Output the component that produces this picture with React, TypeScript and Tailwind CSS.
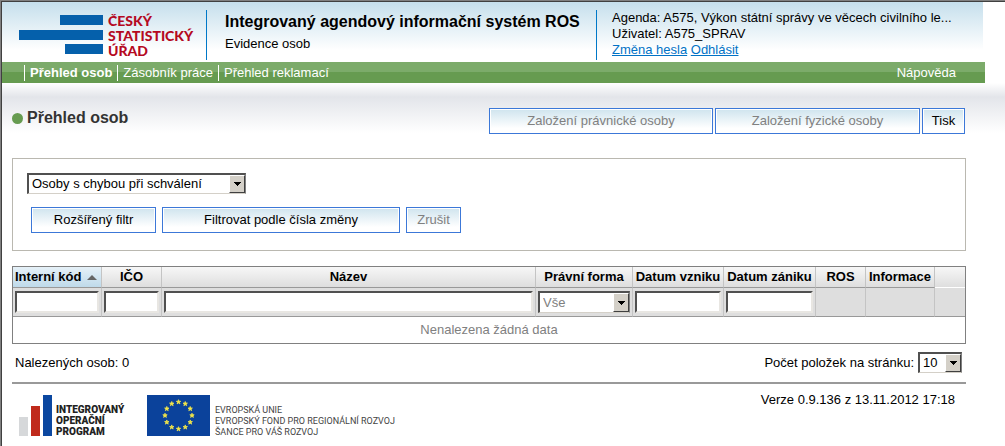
import * as React from "react"
import clsx from "clsx"

const NAV_ITEMS = [
  { label: "Přehled osob", active: true },
  { label: "Zásobník práce", active: false },
  { label: "Přehled reklamací", active: false },
]

type Column = {
  label: string
  width: string
  filter?: "text" | "select"
}

const COLUMNS: Column[] = [
  { label: "Interní kód", width: "w-[89px]", filter: "text" },
  { label: "IČO", width: "w-[60px]", filter: "text" },
  { label: "Název", width: "w-auto", filter: "text" },
  { label: "Právní forma", width: "w-[97px]", filter: "select" },
  { label: "Datum vzniku", width: "w-[91px]", filter: "text" },
  { label: "Datum zániku", width: "w-[92px]", filter: "text" },
  { label: "ROS", width: "w-[50px]" },
  { label: "Informace", width: "w-[69px]" },
  { label: "", width: "w-[30px]" },
]

// 12 stars on a circle, first one at the top
const STARS = Array.from({ length: 12 }, (_, i) => {
  const a = (i * Math.PI) / 6
  return { x: 31.5 + 13.5 * Math.sin(a), y: 20.5 - 13.5 * Math.cos(a) }
})

function Button({ className, ...props }: React.ComponentProps<"button">) {
  return (
    <button
      type="button"
      className={clsx(
        "h-[26px] whitespace-nowrap border border-[#3c78d8] bg-linear-to-b from-[#cfe4ee] to-white to-80% text-[13px] inset-ring inset-ring-white disabled:text-[#808080]",
        className
      )}
      {...props}
    />
  )
}

function Select({ className, options, ...props }: React.ComponentProps<"select"> & { options: string[] }) {
  return (
    <span className={clsx("relative inline-block align-top", className)}>
      <select
        className="block h-full w-full appearance-none border-t-2 border-l-2 border-r border-b border-t-[#505050] border-l-[#505050] border-r-[#808080] border-b-[#d4d0c8] bg-white pl-[3px] text-[13px] leading-4"
        {...props}
      >
        {options.map((o) => (
          <option key={o}>{o}</option>
        ))}
      </select>
      <span className="pointer-events-none absolute top-[2px] right-px bottom-px flex w-4 items-center justify-center border border-t-white border-l-white border-r-[#404040] border-b-[#404040] bg-[#d4d0c8]">
        <svg width="7" height="4" viewBox="0 0 7 4" shapeRendering="crispEdges">
          <path d="M0 0h7v1H6v1H5v1H4v1H3V3H2V2H1V1H0z" />
        </svg>
      </span>
    </span>
  )
}

function Header() {
  return (
    <header className="mr-[22px] flex h-[60px] bg-linear-to-b from-[#c5dfec] to-white to-80% pt-2">
      <div className="flex h-[50px] w-[205px] shrink-0 gap-[5px] border-r border-[#0078c8] pl-[17px]">
        <svg className="mt-[5px]" width="84" height="40" viewBox="0 0 84 40" fill="#0560ab">
          <rect x="41" width="43" height="10" />
          <rect y="15" width="84" height="10" />
          <rect x="46" y="29" width="38" height="10" />
        </svg>
        <div className="mt-[3px] font-['Lato'] text-[14px] leading-[15px] font-black text-[#b5091f]">
          <div>ČESKÝ</div>
          <div>STATISTICKÝ</div>
          <div>ÚŘAD</div>
        </div>
      </div>
      <div className="min-w-0 flex-1 pl-[18px]">
        <h1 className="text-[16px] leading-6 font-bold whitespace-nowrap">
          Integrovaný agendový informační systém ROS
        </h1>
        <p className="mt-[2px] leading-4">Evidence osob</p>
      </div>
      <div className="h-[50px] w-[387px] shrink-0 border-l border-[#0078c8] pl-[15px] leading-4">
        <p>Agenda: A575, Výkon státní správy ve věcech civilního le...</p>
        <p>Uživatel: A575_SPRAV</p>
        <p>
          <a href="#heslo" className="text-[#0072c6] underline">Změna hesla</a>{" "}
          <a href="#odhlasit" className="text-[#0072c6] underline">Odhlásit</a>
        </p>
      </div>
    </header>
  )
}

function Nav() {
  return (
    <nav className="mr-5 flex h-[21px] items-center bg-linear-to-b from-[#7cab6a] from-50% to-[#669b50] to-50% pr-[29px] pl-[22px] text-white">
      {NAV_ITEMS.map((item) => (
        <a
          key={item.label}
          href="#nav"
          className={clsx("mr-[5px] border-l border-white pl-[5px] leading-4", item.active && "font-bold")}
        >
          {item.label}
        </a>
      ))}
      <a href="#napoveda" className="ml-auto leading-4">Nápověda</a>
    </nav>
  )
}

function PersonsTable() {
  return (
    <table className="mt-[15px] w-full table-fixed border-separate border-spacing-0 border border-[#808080]">
      <colgroup>
        {COLUMNS.map((c, i) => (
          <col key={i} className={c.width} />
        ))}
      </colgroup>
      <thead>
        <tr className="h-[21px]">
          {COLUMNS.map((c, i) => (
            <th
              key={i}
              className={clsx(
                "border-b bg-linear-to-b p-0 leading-5 font-bold whitespace-nowrap",
                i === 0 ? "from-[#e6f1f8] to-[#bfdaea]" : "from-[#f7f7f7] to-[#dedede]",
                i < COLUMNS.length - 1 ? "border-r border-r-[#c4c4c4] border-b-[#999]" : "border-b-white"
              )}
            >
              {i === 0 ? (
                <span className="flex items-center gap-[6px] pl-[2px]">
                  {c.label}
                  <svg width="10" height="5" viewBox="0 0 10 5" fill="#666">
                    <path d="M5 0l5 5H0z" />
                  </svg>
                </span>
              ) : (
                c.label
              )}
            </th>
          ))}
        </tr>
        <tr className="h-[29px]">
          {COLUMNS.map((c, i) => (
            <td
              key={i}
              className={clsx(
                "border-b border-b-[#999] bg-[#dedede] px-[2px] py-0",
                i < COLUMNS.length - 1 && "border-r border-r-[#c4c4c4]"
              )}
            >
              {c.filter === "text" && (
                <input
                  type="text"
                  aria-label={c.label}
                  className="block h-[22px] w-full border-t-2 border-r-2 border-b-2 border-l-2 border-t-[#505050] border-r-[#e8e6e2] border-b-[#e8e6e2] border-l-[#505050] bg-white px-1"
                />
              )}
              {c.filter === "select" && (
                <Select aria-label={c.label} options={["Vše"]} className="h-[22px] w-full text-[#808080]" />
              )}
            </td>
          ))}
        </tr>
      </thead>
      <tbody>
        <tr className="h-[26px]">
          <td colSpan={COLUMNS.length} className="p-0 text-center text-[#808080]">
            Nenalezena žádná data
          </td>
        </tr>
      </tbody>
    </table>
  )
}

function Footer() {
  return (
    <footer className="mt-[9px] flex items-start border-t-2 border-[#999] pt-[11px] pl-[7px]">
      <svg width="33" height="41" viewBox="0 0 33 41">
        <rect y="22" width="9" height="19" fill="#d6d8da" />
        <rect x="12" y="11" width="9" height="30" fill="#c02a1c" />
        <rect x="24" width="9" height="41" fill="#0b47a0" />
      </svg>
      <div className="mt-[9px] ml-1 w-[91px] font-['Roboto'] text-[10px] leading-[11px] font-black text-[#222]">
        <div>INTEGROVANÝ</div>
        <div>OPERAČNÍ</div>
        <div>PROGRAM</div>
      </div>
      <svg width="63" height="41" viewBox="0 0 63 41">
        <rect width="63" height="41" fill="#0b429b" />
        {STARS.map((s, i) => (
          <path
            key={i}
            transform={`translate(${s.x} ${s.y})`}
            d="M0-2.3L.6-.7 2.2-.7.9.3 1.4 1.9 0 .9-1.4 1.9-.9.3-2.2-.7-.6-.7z"
            fill="#f3e64a"
            stroke="#f3e64a"
            strokeWidth=".8"
          />
        ))}
      </svg>
      <div className="mt-[10px] ml-[5px] font-['Roboto'] text-[9px] leading-[11px] whitespace-nowrap text-[#444]">
        <div>EVROPSKÁ UNIE</div>
        <div>EVROPSKÝ FOND PRO REGIONÁLNÍ ROZVOJ</div>
        <div>ŠANCE PRO VÁŠ ROZVOJ</div>
      </div>
      <p className="mr-[11px] ml-auto -mt-[3px] leading-4">Verze 0.9.136 z 13.11.2012 17:18</p>
    </footer>
  )
}

export default function App() {
  return (
    <div className="border-t border-l border-[#808080] bg-white font-['Liberation_Sans',Arial,sans-serif] text-[13px] text-black">
      <div className="min-h-[calc(100vh-1px)] border-t border-l border-[#404040]">
        <Header />
        <Nav />
        <main className="bg-linear-to-b from-white via-[#e3e5ea] via-[14px] to-white to-[50px] bg-no-repeat pt-[25px] pr-[39px] pl-[10px]">
          <div className="flex items-start gap-[2px] pr-px">
            <h2 className="mr-auto flex items-center gap-1 text-[16px] leading-5 font-bold text-[#333]">
              <span className="size-[11px] rounded-full bg-[#669b50]" />
              Přehled osob
            </h2>
            <Button disabled className="w-[224px]">Založení právnické osoby</Button>
            <Button disabled className="w-[205px]">Založení fyzické osoby</Button>
            <Button className="w-[43px]">Tisk</Button>
          </div>

          <form className="mt-6 h-[93px] border border-[#bab8b0] px-[14px] pt-[14px]">
            <Select
              aria-label="Filtr osob"
              options={["Osoby s chybou při schválení"]}
              className="h-[21px] w-[219px]"
            />
            <div className="mt-[13px] flex gap-[6px] pl-1">
              <Button className="w-[125px]">Rozšířený filtr</Button>
              <Button className="w-[238px]">Filtrovat podle čísla změny</Button>
              <Button disabled className="w-[55px]">Zrušit</Button>
            </div>
          </form>

          <PersonsTable />

          <div className="mt-2 flex items-center pr-1 pl-[3px]">
            <p className="mr-auto leading-4">Nalezených osob: 0</p>
            <label htmlFor="page-size" className="mr-1">Počet položek na stránku:</label>
            <Select id="page-size" options={["10"]} className="h-[21px] w-11" />
          </div>

          <Footer />
        </main>
      </div>
    </div>
  )
}
